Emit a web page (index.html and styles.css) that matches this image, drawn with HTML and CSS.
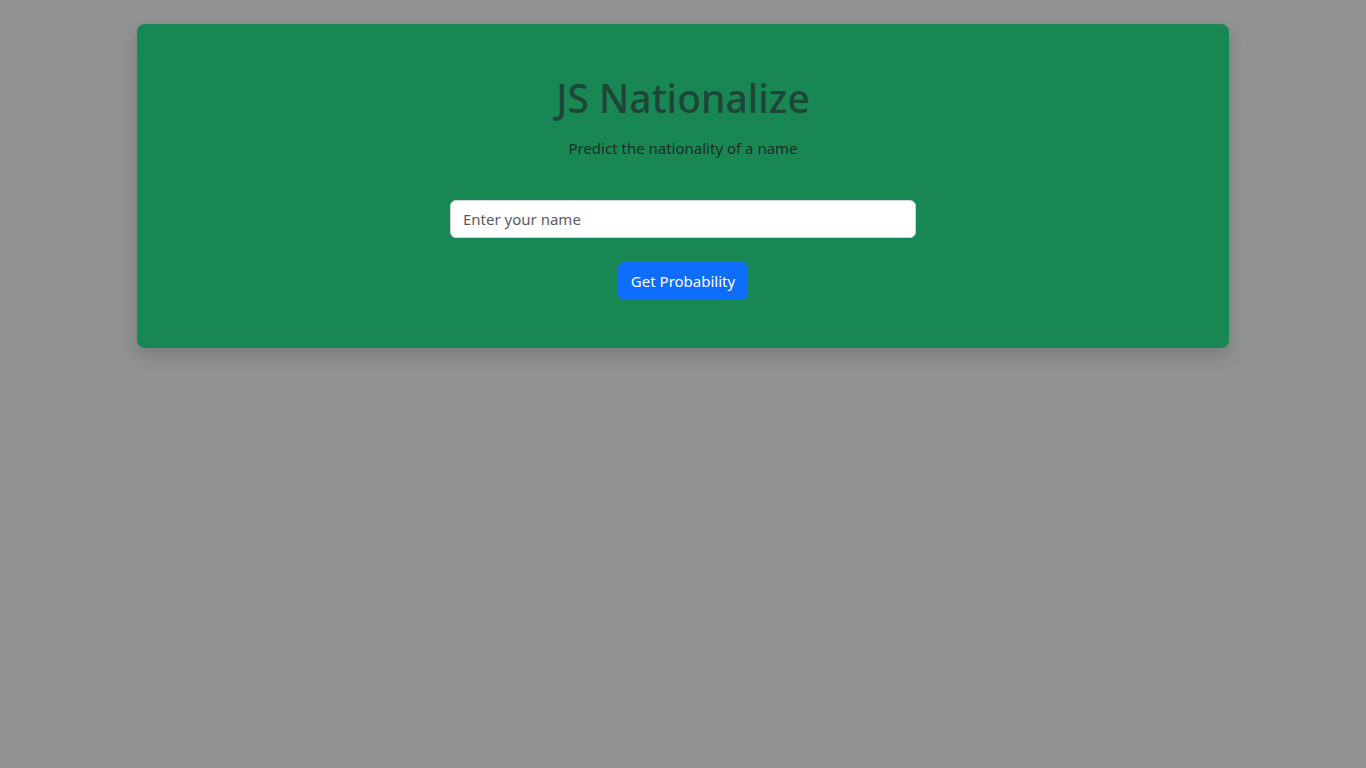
FILE: index.html
```html
<!DOCTYPE html>
<html lang="en">
<head>
<meta charset="utf-8">
<title>JS Nationalize</title>
<link rel="stylesheet" href="styles.css">
</head>
<body>
<main class="page">
  <section class="card">
    <h1 class="title">JS Nationalize</h1>
    <p class="subtitle">Predict the nationality of a name</p>
    <form class="form">
      <input class="name-input" type="text" placeholder="Enter your name">
      <button class="btn" type="button">Get Probability</button>
    </form>
  </section>
</main>
</body>
</html>
```

FILE: styles.css
```css
* { box-sizing: border-box; }
html, body { margin: 0; padding: 0; }
body {
  background: #909193;
  font-family: "Noto Sans", "Open Sans", sans-serif;
  color: #212529;
  min-height: 768px;
}
.page {
  display: flex;
  justify-content: center;
  padding-top: 24px;
}
.card {
  width: 1092px;
  background: #198754;
  border-radius: 8px;
  box-shadow: 0 8px 16px rgba(0,0,0,0.15);
  padding: 50px 0 48px;
  display: flex;
  flex-direction: column;
  align-items: center;
}
.title {
  margin: 0;
  font-size: 39px;
  line-height: 48px;
  font-weight: 500;
  color: #1f4539;
}
.subtitle {
  margin: 14px 0 0;
  font-size: 15px;
  line-height: 24px;
  color: #1c2e28;
}
.form {
  margin-top: 40px;
  display: flex;
  flex-direction: column;
  align-items: center;
  gap: 24px;
}
.name-input {
  width: 466px;
  height: 38px;
  padding: 6px 12px;
  border: 1px solid #ced4da;
  border-radius: 6px;
  background: #fff;
  font-family: inherit;
  font-size: 15px;
  color: #212529;
  outline: none;
}
.name-input::placeholder { color: #595c5f; }
.btn {
  height: 38px;
  padding: 0 12px;
  border: 1px solid #0d6efd;
  border-radius: 6px;
  background: #0d6efd;
  color: #fff;
  font-family: inherit;
  font-size: 15px;
  cursor: pointer;
}
```
